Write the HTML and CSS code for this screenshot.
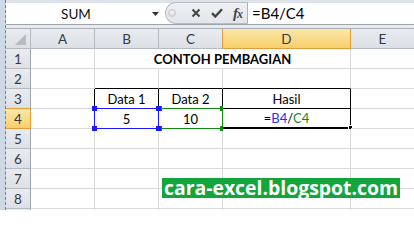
FILE: index.html
```html
<!DOCTYPE html>
<html>
<head>
<meta charset="utf-8">
<link rel="stylesheet" href="styles.css">
</head>
<body>
<div class="app">
  <div class="rail"></div>
  <div class="main">
    <div class="top"></div>
    <div class="fbar">
      <div class="namebox">
        <span class="name">SUM</span>
        <svg class="arrow" width="7" height="4" viewBox="0 0 7 4"><path d="M0 0H7L3.5 4Z" fill="#333"/></svg>
      </div>
      <div class="tools">
        <span class="grip"></span>
        <svg class="ic-x" width="10" height="10" viewBox="0 0 10 10"><path d="M1.5 1.5L8.5 8.5M8.5 1.5L1.5 8.5" stroke="#444" stroke-width="2" fill="none"/></svg>
        <svg class="ic-ok" width="12" height="10" viewBox="0 0 12 10"><path d="M1 5.2L4.3 8.5L11 1.2" stroke="#444" stroke-width="2.4" fill="none"/></svg>
        <span class="fx"><i>f</i><span class="fxx">x</span></span>
      </div>
      <div class="input">=B4/C4</div>
    </div>
    <div class="gap"></div>
    <div class="sheet">
      <div class="c h corner"><span class="tri"></span></div>
      <div class="c h">A</div>
      <div class="c h">B</div>
      <div class="c h selprev">C</div>
      <div class="c h sel">D</div>
      <div class="c h">E</div>

      <div class="c h rh">1</div>
      <div class="c"></div>
      <div class="c span3 bold">CONTOH PEMBAGIAN</div>
      <div class="c"></div>

      <div class="c h rh">2</div>
      <div class="c"></div>
      <div class="c bb"></div>
      <div class="c bb"></div>
      <div class="c bb"></div>
      <div class="c"></div>

      <div class="c h rh selprev-b">3</div>
      <div class="c br"></div>
      <div class="c br bb">Data 1</div>
      <div class="c br bb">Data 2</div>
      <div class="c br bb">Hasil</div>
      <div class="c"></div>

      <div class="c h rh sel">4</div>
      <div class="c br"></div>
      <div class="c br bb">5<span class="ref ref-b"><i class="hd tl"></i><i class="hd tr"></i><i class="hd bl"></i><i class="hd br2"></i></span></div>
      <div class="c br bb">10<span class="ref ref-c"><i class="hd tl"></i><i class="hd tr"></i><i class="hd bl"></i><i class="hd br2"></i></span></div>
      <div class="c br bb active"><span>=<span class="blue">B4</span>/<span class="green">C4</span></span><span class="pink"></span><span class="fill"></span></div>
      <div class="c"></div>

      <div class="c h rh">5</div>
      <div class="c"></div><div class="c"></div><div class="c"></div><div class="c"></div><div class="c"></div>
      <div class="c h rh">6</div>
      <div class="c"></div><div class="c"></div><div class="c"></div><div class="c"></div><div class="c"></div>
      <div class="c h rh">7</div>
      <div class="c"></div><div class="c"></div><div class="c"></div><div class="c"></div><div class="c"></div>
      <div class="c h rh">8</div>
      <div class="c"></div><div class="c"></div><div class="c"></div><div class="c"></div><div class="c"></div>
      <div class="c h rh"></div>
      <div class="c"></div><div class="c"></div><div class="c"></div><div class="c"></div><div class="c"></div>

      <div class="wm">cara-excel.blogspot.com</div>
    </div>
  </div>
</div>
</body>
</html>
```

FILE: styles.css
```css
html, body {
  margin: 0;
  padding: 0;
  width: 414px;
  height: 210px;
  overflow: hidden;
  background: #ffffff;
  font-family: Lato, "Open Sans", sans-serif;
}

.app {
  display: flex;
  width: 414px;
  height: 210px;
  overflow: hidden;
}

.rail {
  width: 5px;
  flex: none;
  background: #cfd8e5;
  border-right: 1px dashed #3d86e6;
}

.main {
  flex: 1;
  display: flex;
  flex-direction: column;
  min-width: 0;
  overflow: hidden;
}

.main > * {
  flex: none;
}

.top {
  height: 3px;
  background: #dee3ea;
}

.fbar {
  height: 21px;
  display: flex;
  border-bottom: 1px solid #9ea5ae;
  background: #ffffff;
}

.namebox {
  width: 159px;
  flex: none;
  display: flex;
  align-items: center;
}

.name {
  width: 140px;
  text-align: center;
  font-size: 13.5px;
  color: #111;
}

.arrow {
  margin-left: 6px;
}

.tools {
  width: 83px;
  flex: none;
  box-sizing: border-box;
  display: flex;
  align-items: center;
  background: linear-gradient(#eef0f3, #e3e6ea);
  border: 1px solid #b9bec5;
  border-right-color: #aab0b8;
  border-radius: 11px 0 0 11px;
  margin-top: -1px;
  height: 22px;
}

.grip {
  width: 8px;
  height: 8px;
  border-radius: 50%;
  margin-left: 2px;
  background: radial-gradient(circle at 50% 40%, #f4f5f7, #cfd3d8);
  border: 1px solid #c3c7cd;
  box-sizing: border-box;
}

.ic-x {
  margin-left: 15px;
}

.ic-ok {
  margin-left: 10px;
}

.fx {
  margin-left: 10px;
  font-family: "Liberation Serif", serif;
  font-size: 15px;
  color: #444;
  font-weight: bold;
  letter-spacing: -1px;
  line-height: 1;
}

.fxx {
  font-style: italic;
  font-size: 12px;
}

.input {
  flex: 1;
  padding-left: 4px;
  font-size: 15px;
  line-height: 21px;
  color: #000;
}

.gap {
  height: 3px;
  background: #e7eaee;
}

.sheet {
  position: relative;
  display: grid;
  grid-template-columns: 25px 64px 64px 64px 128px 64px;
  grid-auto-rows: 20px;
  border-top: 1px solid #a9b0b8;
}

.c {
  position: relative;
  box-sizing: border-box;
  border-right: 1px solid #d9d9d9;
  border-bottom: 1px solid #d9d9d9;
  display: flex;
  align-items: center;
  justify-content: center;
  font-size: 13px;
  color: #000;
  line-height: 19px;
  padding-top: 1px;
}

.h {
  background: linear-gradient(#e8ebef, #dde1e6);
  border-right-color: #b4bac1;
  border-bottom-color: #b4bac1;
  color: #333a44;
  font-size: 13.5px;
}

.rh {
  border-right-color: #9ea6b0;
}

.corner {
  align-items: flex-end;
  justify-content: flex-end;
}

.tri {
  width: 0;
  height: 0;
  border-left: 11px solid transparent;
  border-bottom: 11px solid #b7bcc3;
  margin: 0 4px 3px 0;
}

.sel {
  background: linear-gradient(#fbe7a8, #f7d06c);
  border-right-color: #e29c3b;
  border-bottom-color: #e29c3b;
  color: #333a44;
}

.selprev {
  border-right-color: #e29c3b;
}

.selprev-b {
  border-bottom-color: #e29c3b;
}

.span3 {
  grid-column: span 3;
}

.bold {
  font-weight: bold;
}

.br {
  border-right-color: #000;
}

.bb {
  border-bottom-color: #000;
}

.ref {
  position: absolute;
  left: -1px;
  top: -1px;
  right: -1px;
  bottom: -1px;
  border: 1px solid;
  pointer-events: none;
}

.ref-b {
  border-color: #1a1aff;
  z-index: 2;
}

.ref-c {
  border-color: #108a10;
  z-index: 1;
}

.hd {
  position: absolute;
  width: 5px;
  height: 5px;
}

.ref-b .hd {
  background: #1a1aff;
}

.ref-c .hd {
  background: #108a10;
  width: 3px;
}

.hd.tl { left: -3px; top: -3px; }
.hd.tr { right: -3px; top: -3px; }
.hd.bl { left: -3px; bottom: -3px; }
.hd.br2 { right: -3px; bottom: -3px; }

.ref-c .hd.tl, .ref-c .hd.bl { left: 0; }
.ref-c .hd.tr, .ref-c .hd.br2 { right: -1px; }

.blue {
  color: #2b2bff;
}

.green {
  color: #118a11;
}

.pink {
  position: absolute;
  left: -1px;
  top: 0;
  bottom: 0;
  width: 1px;
  background: #f08ae8;
}

.fill {
  position: absolute;
  right: -3px;
  bottom: -3px;
  width: 5px;
  height: 5px;
  background: #000;
  border: 1px solid #fff;
  box-sizing: border-box;
}

.active {
  border-bottom-width: 2px;
}

.wm {
  position: absolute;
  left: 156px;
  top: 149px;
  height: 20px;
  padding: 0 2px;
  background: #12a53c;
  color: #fff;
  font-family: "Open Sans", sans-serif;
  font-weight: bold;
  font-size: 19.4px;
  line-height: 20px;
  z-index: 5;
}
```
